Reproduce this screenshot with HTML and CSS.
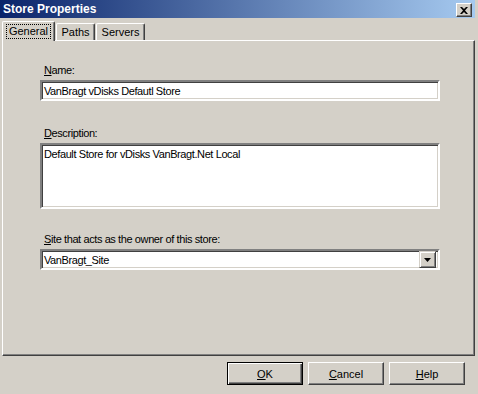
FILE: index.html
```html
<!doctype html>
<html>
<head>
<meta charset="utf-8">
<title>Store Properties</title>
<link rel="stylesheet" href="styles.css">
</head>
<body>
<div class="dialog">
	<div class="titlebar">
		<span class="title">Store Properties</span>
		<span class="close">
			<svg width="8" height="7" viewBox="0 0 8 7"><path d="M0 0h2l2 2 2-2h2L5 3.5 8 7H6L4 5 2 7H0l3-3.5z" fill="#000"/></svg>
		</span>
	</div>
	<div class="tabs">
		<span class="tab active"><span class="focus">General</span></span>
		<span class="tab paths">Paths</span>
		<span class="tab servers">Servers</span>
	</div>
	<div class="panel">
		<div class="field name">
			<label><u>N</u>ame:</label>
			<div class="box input">VanBragt vDisks Defautl Store</div>
		</div>
		<div class="field desc">
			<label><u>D</u>escription:</label>
			<div class="box textarea">Default Store for vDisks VanBragt.Net Local</div>
		</div>
		<div class="field site">
			<label><u>S</u>ite that acts as the owner of this store:</label>
			<div class="box select">
				<span class="value">VanBragt_Site</span>
				<span class="drop"><svg width="7" height="4" viewBox="0 0 7 4"><path d="M0 0h7L3.5 4z" fill="#000"/></svg></span>
			</div>
		</div>
	</div>
	<div class="buttons">
		<span class="btn default"><u>O</u>K</span>
		<span class="btn"><u>C</u>ancel</span>
		<span class="btn"><u>H</u>elp</span>
	</div>
</div>
</body>
</html>
```
FILE: styles.css
```css
body {
	margin: 0;
	background: #d4d0c8;
	font: 11px "Liberation Sans", Arial, sans-serif;
	letter-spacing: -0.4px;
	color: #000;
}
.dialog {
	width: 478px;
	height: 394px;
	background: #d4d0c8;
	overflow: hidden;
}
.titlebar {
	height: 18px;
	width: 475px;
	background: linear-gradient(to right, #0a246a, #a6caf0);
	display: flex;
	align-items: center;
	justify-content: space-between;
	padding: 0 3px 0 3px;
	box-sizing: border-box;
}
.title {
	color: #fff;
	font-weight: bold;
	font-size: 12px;
	letter-spacing: 0;
}
.close {
	width: 16px;
	height: 14px;
	box-sizing: border-box;
	background: #d4d0c8;
	border: 1px solid;
	border-color: #fff #404040 #404040 #fff;
	box-shadow: inset -1px -1px #808080;
	display: flex;
	align-items: center;
	justify-content: center;
	margin-top: 2px;
}
.tabs {
	display: flex;
	align-items: flex-end;
	height: 22px;
	padding-left: 2px;
	width: 473px;
}
.tab {
	height: 17px;
	line-height: 16px;
	box-sizing: border-box;
	text-align: center;
	border: 1px solid;
	border-color: #fff #404040 transparent #fff;
	box-shadow: inset -1px 0 #808080;
	border-bottom: none;
	border-radius: 2px 2px 0 0;
	letter-spacing: 0;
}
.tab.paths {
	width: 39px;
	margin-left: 1px;
}
.tab.servers {
	width: 49px;
	margin-left: 1px;
}
.tab.active {
	height: 20px;
	width: 53px;
	padding: 0 3px;
	position: relative;
	top: 1px;
	background: #d4d0c8;
	z-index: 1;
}
.focus {
	display: block;
	outline: 1px dotted #000;
	outline-offset: -1px;
	margin-top: 2px;
	line-height: 15px;
}
.panel {
	margin-left: 2px;
	width: 473px;
	height: 316px;
	box-sizing: border-box;
	border: 1px solid;
	border-color: #fff #404040 #404040 #fff;
	box-shadow: inset -1px -1px #808080;
	padding: 0 0 0 37px;
	display: flex;
	flex-direction: column;
}
.field label {
	display: block;
	padding-left: 4px;
	height: 15px;
	line-height: 15px;
	margin-bottom: 2px;
}
.field.name {
	margin-top: 22px;
}
.field.desc {
	margin-top: 25px;
}
.field.site {
	margin-top: 23px;
}
.box {
	width: 400px;
	box-sizing: border-box;
	background: #fff;
	border: 2px solid;
	border-color: #808080 #fff #fff #808080;
	box-shadow: inset 1px 1px #404040, inset -1px -1px #d4d0c8;
	padding: 3px 2px;
}
.input {
	height: 21px;
}
.textarea {
	height: 66px;
}
.select {
	height: 21px;
	display: flex;
	justify-content: space-between;
	padding: 0 2px 0 2px;
	align-items: center;
}
.drop {
	width: 17px;
	height: 17px;
	box-sizing: border-box;
	background: #d4d0c8;
	border: 1px solid;
	border-color: #d4d0c8 #404040 #404040 #d4d0c8;
	box-shadow: inset 1px 1px #fff, inset -1px -1px #808080;
	display: flex;
	align-items: center;
	justify-content: center;
}
.buttons {
	display: flex;
	justify-content: flex-end;
	gap: 5px;
	padding: 6px 13px 0 0;
}
.btn {
	width: 76px;
	height: 23px;
	box-sizing: border-box;
	border: 1px solid;
	border-color: #fff #404040 #404040 #fff;
	box-shadow: inset -1px -1px #808080;
	display: flex;
	align-items: center;
	justify-content: center;
	letter-spacing: 0;
}
.btn.default {
	border-color: #000;
	box-shadow: inset 1px 1px #fff, inset -1px -1px #404040, inset -2px -2px #808080;
}
```
